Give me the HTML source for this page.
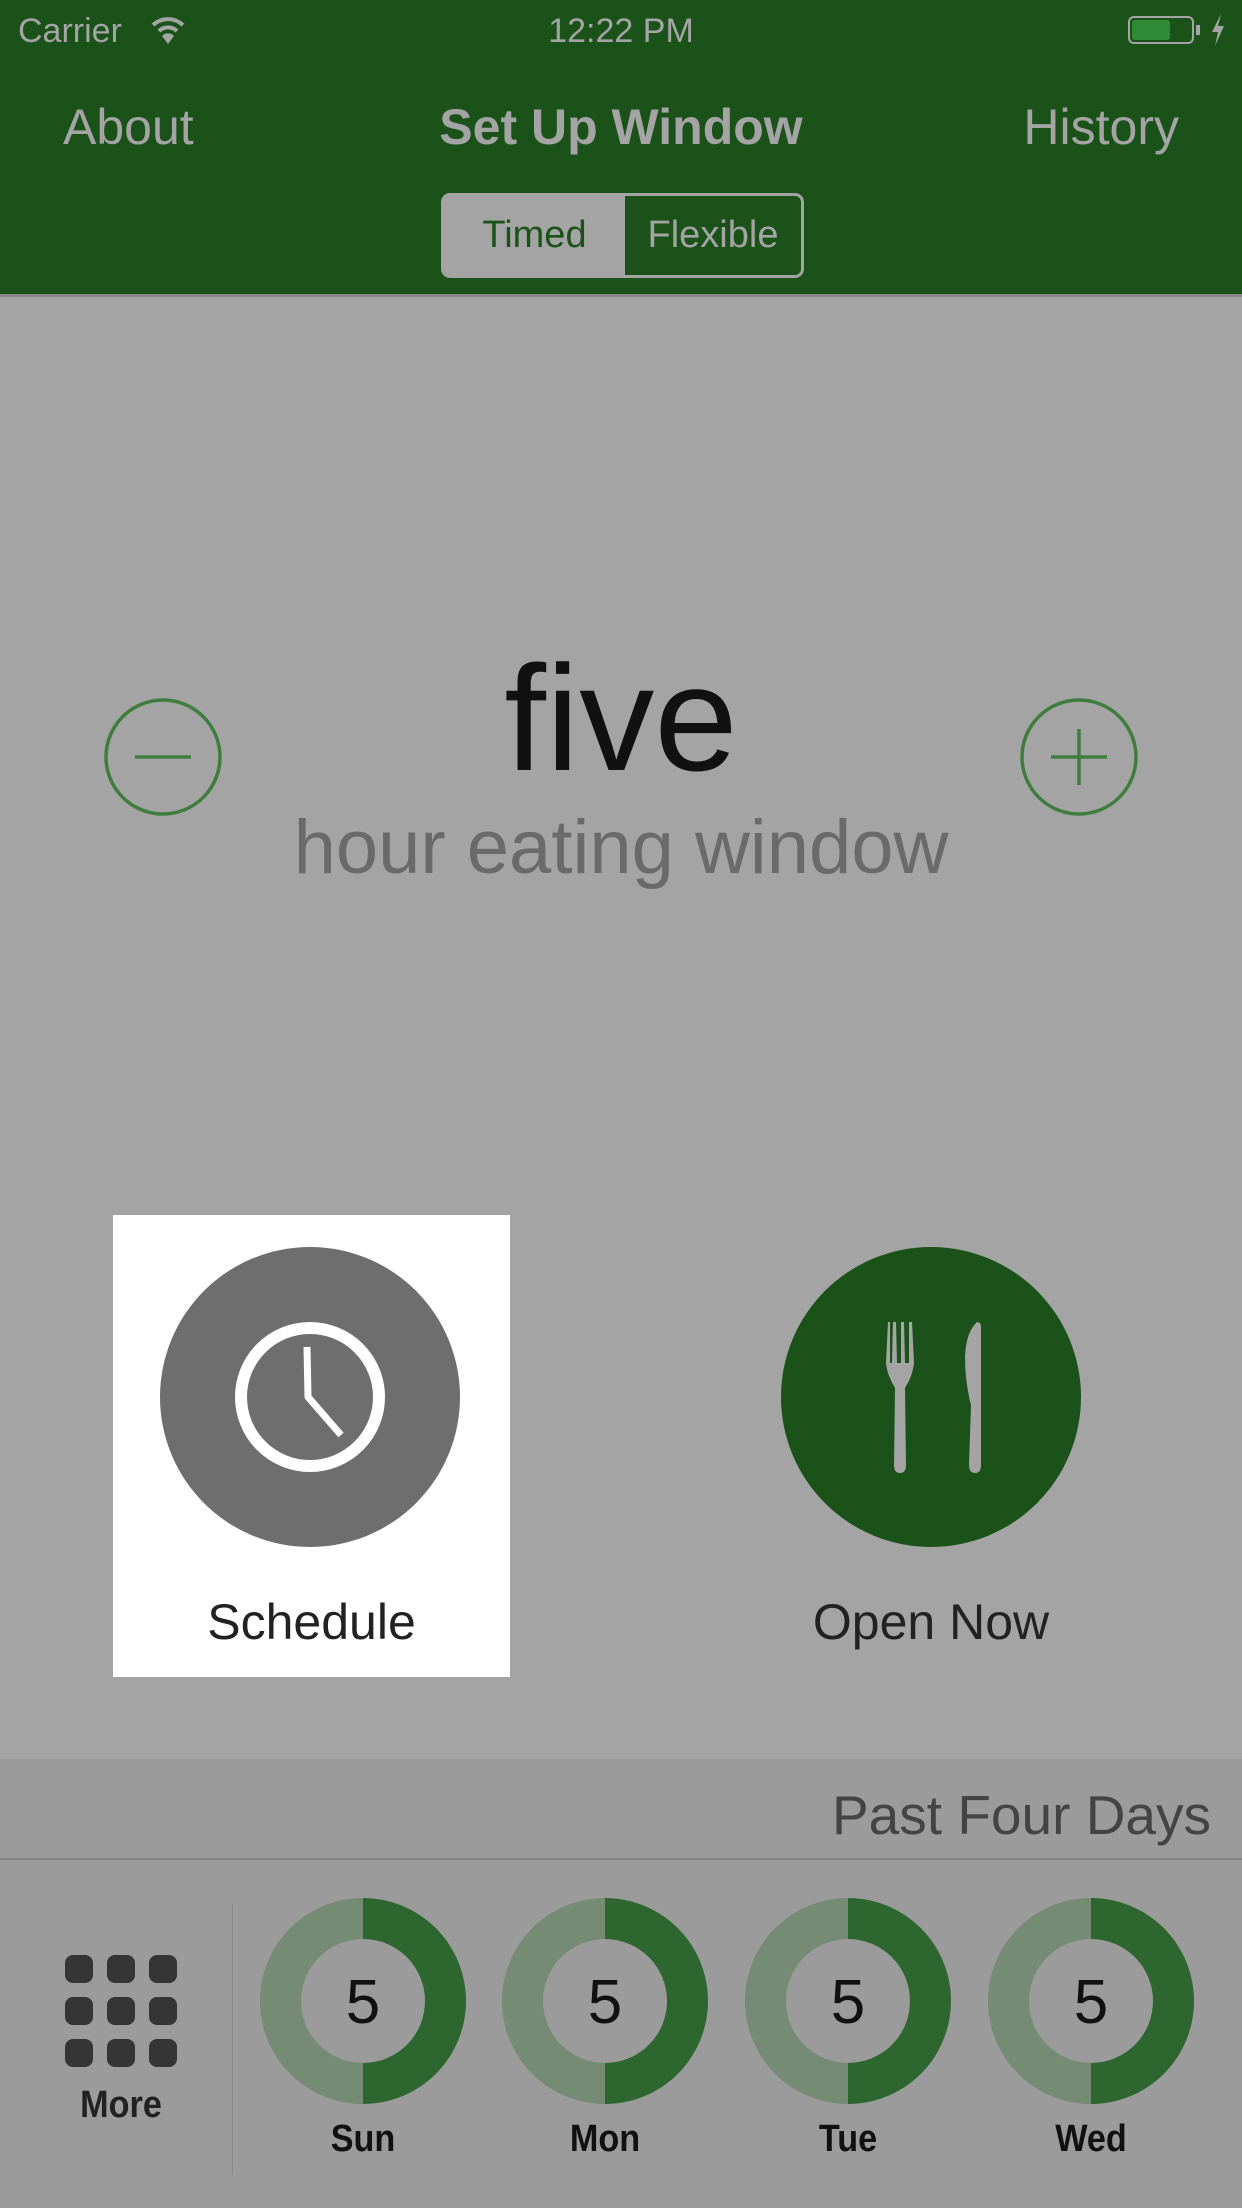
<!DOCTYPE html>
<html><head><meta charset="utf-8"><style>
*{margin:0;padding:0;box-sizing:border-box}
body{width:1242px;height:2208px;background:#a4a4a4;font-family:"Liberation Sans",sans-serif;position:relative;overflow:hidden}
.abs{position:absolute}
.nav{left:0;top:0;width:1242px;height:297px;background:#1a5219;border-bottom:3px solid #888}
.t{white-space:nowrap;color:#a4a4a4}
</style></head><body>
<div class="abs nav"></div>
<div class="abs t" style="left:18px;top:12px;font-size:34px">Carrier</div>
<svg class="abs" style="left:150px;top:14px" width="36" height="32" viewBox="0 0 36 32"><path d="M3 11 A22 22 0 0 1 33 11" stroke="#a4a4a4" stroke-width="4" fill="none"/><path d="M9 17 A13 13 0 0 1 27 17" stroke="#a4a4a4" stroke-width="4" fill="none"/><path d="M18 30 L12 22 A8 8 0 0 1 24 22 Z" fill="#a4a4a4"/></svg>
<div class="abs t" style="left:0;width:1242px;text-align:center;top:12px;font-size:34px">12:22 PM</div>
<div class="abs" style="left:1128px;top:16px;width:66px;height:28px;border:2px solid #a4a4a4;border-radius:6px"><div style="margin:2px;width:38px;height:20px;background:#2d8a35;border-radius:3px"></div></div>
<div class="abs" style="left:1196px;top:25px;width:4px;height:10px;background:#a4a4a4"></div>
<svg class="abs" style="left:1210px;top:14px" width="16" height="32" viewBox="0 0 16 32"><path d="M11 0 L2 18 H8 L5 32 L14 12 H8 Z" fill="#a4a4a4"/></svg>
<div class="abs t" style="left:63px;top:98px;font-size:50px">About</div>
<div class="abs t" style="left:0;width:1242px;text-align:center;top:98px;font-size:50px;font-weight:bold">Set Up Window</div>
<div class="abs t" style="right:63px;top:98px;font-size:50px">History</div>
<div class="abs" style="left:441px;top:193px;width:363px;height:85px;border:3px solid #a4a4a4;border-radius:9px;overflow:hidden;display:flex">
<div style="width:181px;background:#a4a4a4;color:#1a5219;font-size:38px;text-align:center;line-height:79px">Timed</div>
<div style="flex:1;color:#a4a4a4;font-size:38px;text-align:center;line-height:79px">Flexible</div></div>

<svg class="abs" style="left:102px;top:696px" width="122" height="122"><circle cx="61" cy="61" r="57" fill="none" stroke="#3f7d3f" stroke-width="3.5"/><line x1="33" y1="61" x2="89" y2="61" stroke="#3f7d3f" stroke-width="3.5"/></svg>
<svg class="abs" style="left:1018px;top:696px" width="122" height="122"><circle cx="61" cy="61" r="57" fill="none" stroke="#3f7d3f" stroke-width="3.5"/><line x1="33" y1="61" x2="89" y2="61" stroke="#3f7d3f" stroke-width="3.5"/><line x1="61" y1="33" x2="61" y2="89" stroke="#3f7d3f" stroke-width="3.5"/></svg>
<div class="abs" style="left:0;width:1242px;text-align:center;top:628px;font-size:150px;color:#111;line-height:180px">five</div>
<div class="abs" style="left:0;width:1242px;text-align:center;top:803px;font-size:76px;color:#6a6a6a;line-height:90px">hour eating window</div>

<div class="abs" style="left:113px;top:1215px;width:397px;height:462px;background:#fff"></div>
<svg class="abs" style="left:160px;top:1247px" width="300" height="300" viewBox="0 0 300 300"><circle cx="150" cy="150" r="150" fill="#6e6e6e"/><circle cx="150" cy="150" r="69" fill="none" stroke="#fff" stroke-width="12"/><path d="M147 100 L148 150 L181 188" stroke="#fff" stroke-width="7" fill="none" stroke-linejoin="round"/></svg>
<div class="abs" style="left:113px;width:397px;text-align:center;top:1593px;font-size:50px;color:#222">Schedule</div>
<svg class="abs" style="left:781px;top:1247px" width="300" height="300" viewBox="0 0 300 300"><circle cx="150" cy="150" r="150" fill="#1a5219"/>
<path d="M107 75 L105 116 Q106 128 114 141 L113 218 Q113 226 119 226 Q125 226 125 218 L124 141 Q132 128 133 116 L131 75 L128 75 L128 116 L124 116 L123 75 L120 75 L120 116 L116 116 L115 75 L112 75 L111 116 L109 116 L109 75 Z" fill="#a4a4a4"/>
<path d="M196 75 Q185 85 184 110 Q184 135 190 158 L188 218 Q188 226 194 226 Q200 226 200 218 L200 80 Q200 75 196 75 Z" fill="#a4a4a4"/></svg>
<div class="abs" style="left:731px;width:400px;text-align:center;top:1593px;font-size:50px;color:#222">Open Now</div>

<div class="abs" style="left:0;top:1759px;width:1242px;height:449px;background:#9b9b9b"></div>
<div class="abs" style="right:31px;top:1783px;font-size:55px;color:#444">Past Four Days</div>
<div class="abs" style="left:0;top:1858px;width:1242px;height:2px;background:#838383"></div>
<div class="abs" style="left:232px;top:1904px;width:1px;height:271px;background:#8a8a8a"></div>
<svg class="abs" style="left:65px;top:1955px" width="112" height="112"><g fill="#353535">
<rect x="0" y="0" width="28" height="28" rx="8"/><rect x="42" y="0" width="28" height="28" rx="8"/><rect x="84" y="0" width="28" height="28" rx="8"/>
<rect x="0" y="42" width="28" height="28" rx="8"/><rect x="42" y="42" width="28" height="28" rx="8"/><rect x="84" y="42" width="28" height="28" rx="8"/>
<rect x="0" y="84" width="28" height="28" rx="8"/><rect x="42" y="84" width="28" height="28" rx="8"/><rect x="84" y="84" width="28" height="28" rx="8"/></g></svg>
<div class="abs" style="left:21px;width:200px;text-align:center;top:2084px;font-size:38px;color:#222;font-weight:bold;transform:scaleX(0.9)">More</div>

<svg class="abs" style="left:0;top:1895px" width="1242" height="220">
<defs><g id="r"><path d="M0 -103 A103 103 0 0 0 0 103 L0 62 A62 62 0 0 1 0 -62 Z" fill="#758b74"/><path d="M0 -103 A103 103 0 0 1 0 103 L0 62 A62 62 0 0 0 0 -62 Z" fill="#2e6630"/></g></defs>
<use href="#r" x="363" y="106"/><use href="#r" x="605" y="106"/><use href="#r" x="848" y="106"/><use href="#r" x="1091" y="106"/>
<g font-family="Liberation Sans" font-size="62" fill="#111" text-anchor="middle">
<text x="363" y="128">5</text><text x="605" y="128">5</text><text x="848" y="128">5</text><text x="1091" y="128">5</text></g></svg>
<div class="abs" style="left:263px;width:200px;text-align:center;top:2118px;font-size:38px;color:#111;font-weight:bold;transform:scaleX(0.9)">Sun</div>
<div class="abs" style="left:505px;width:200px;text-align:center;top:2118px;font-size:38px;color:#111;font-weight:bold;transform:scaleX(0.9)">Mon</div>
<div class="abs" style="left:748px;width:200px;text-align:center;top:2118px;font-size:38px;color:#111;font-weight:bold;transform:scaleX(0.9)">Tue</div>
<div class="abs" style="left:991px;width:200px;text-align:center;top:2118px;font-size:38px;color:#111;font-weight:bold;transform:scaleX(0.9)">Wed</div>
</body></html>
